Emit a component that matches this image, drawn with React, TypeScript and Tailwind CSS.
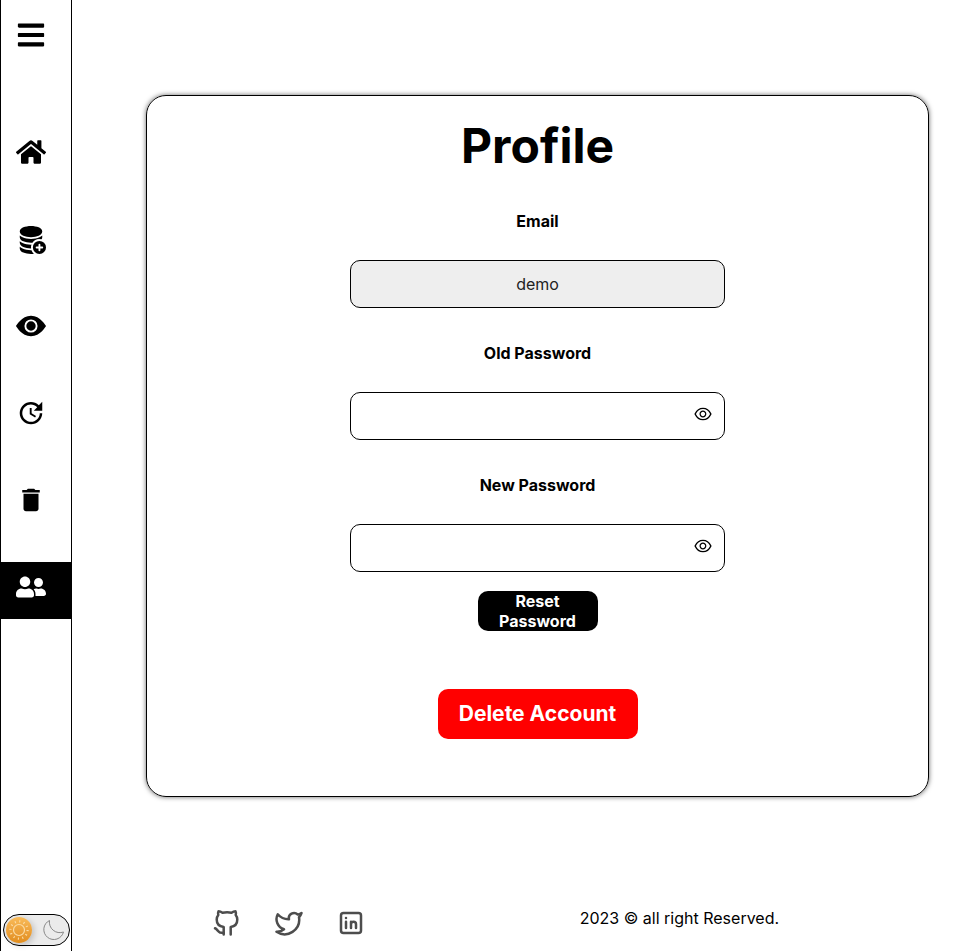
import { useState } from "react";
import type { ReactNode } from "react";
import { FaBars, FaHome, FaUserFriends } from "react-icons/fa";
import { BsDatabaseFillAdd, BsEyeFill } from "react-icons/bs";
import { MdUpdate, MdDelete } from "react-icons/md";
import { AiOutlineEye } from "react-icons/ai";
import { Twitter } from "lucide-react";

const links: { name: string; icon: ReactNode; active?: boolean }[] = [
  { name: "Home", icon: <FaHome size={30} /> },
  { name: "Add data", icon: <BsDatabaseFillAdd size={30} /> },
  { name: "View", icon: <BsEyeFill size={30} /> },
  { name: "Update", icon: <MdUpdate size={30} /> },
  { name: "Delete", icon: <MdDelete size={30} /> },
  { name: "Profile", icon: <FaUserFriends size={30} />, active: true },
];

function Sidebar() {
  return (
    <nav className="flex w-[72px] shrink-0 flex-col border-x border-black">
      <button type="button" aria-label="Menu" className="mt-5 ml-[15px] self-start">
        <FaBars size={30} />
      </button>
      <div className="mt-[77px] flex flex-col gap-[30px]">
        {links.map((link) => (
          <a
            key={link.name}
            href="#"
            aria-label={link.name}
            className={
              link.active
                ? "flex h-[57px] items-start bg-black pt-[10px] pl-[15px] text-white"
                : "flex h-[57px] items-start pt-[10px] pl-[15px]"
            }
          >
            {link.icon}
          </a>
        ))}
      </div>
      <ThemeSwitch />
    </nav>
  );
}

function ThemeSwitch() {
  const [dark, setDark] = useState(false);
  return (
    <label className="mx-auto mt-auto mb-[5px] flex h-8 w-[67px] cursor-pointer items-center justify-between rounded-full border border-black bg-[#ebebeb] pr-1 pl-[2px]">
      <input
        type="checkbox"
        aria-label="Dark mode"
        className="sr-only"
        checked={dark}
        onChange={(e) => setDark(e.target.checked)}
      />
      <span className="flex size-[26px] items-center justify-center rounded-full bg-linear-to-b from-[#f9bb58] to-[#e18d1c] shadow-[2px_2px_6px_rgba(0,0,0,0.2)]">
        <svg width="22" height="22" viewBox="0 0 22 22" fill="none" stroke="#fbdca6" strokeWidth="1.2">
          <circle cx="11" cy="11" r="5.5" />
          <circle cx="11" cy="11" r="8.6" strokeWidth="2.2" strokeDasharray="1.1 3.4" />
        </svg>
      </span>
      <svg width="22" height="22" viewBox="0 0 22 22" fill="none" stroke="#888" strokeWidth="1">
        <path d="M6.500 1.500A10 10 0 1 0 20.500 13A10.500 10.500 0 0 1 6.500 1.500Z" />
      </svg>
    </label>
  );
}

function PasswordField({ id, label }: { id: string; label: string }) {
  const [shown, setShown] = useState(false);
  return (
    <div className="flex w-full flex-col items-center">
      <label htmlFor={id} className="mb-[29px] leading-5 font-bold">
        {label}
      </label>
      <div className="flex h-12 w-full items-center rounded-[10px] border border-black pr-[11px]">
        <input
          id={id}
          type={shown ? "text" : "password"}
          className="h-full min-w-0 flex-1 bg-transparent text-center outline-none"
        />
        <button type="button" aria-label={"Show " + label} onClick={() => setShown(!shown)} className="pb-[5px]">
          <AiOutlineEye size={20} />
        </button>
      </div>
    </div>
  );
}

function Footer() {
  return (
    <footer className="mt-auto mr-[88px] ml-[33px] flex h-[43px] items-start justify-around">
      <div className="flex gap-8 text-[#4d4d4d]">
        <a href="#" aria-label="GitHub">
          <svg width="30" height="30" viewBox="0 0 30 30" fill="none" stroke="currentColor" strokeWidth="2.5" strokeLinecap="round" strokeLinejoin="round">
            <path d="M11.700 26.500V19C7.500 18.500 4.700 16 4.700 11.500C4.700 9.500 5.300 8.200 6.300 7C5.900 5.800 5.900 4.500 6.500 3.200C8 3.200 9.300 3.900 10.500 4.800C13 4.300 17.300 4.300 19.500 4.800C20.700 3.900 22 3.200 23.500 3.200C24.100 4.500 24.100 5.800 23.700 7C24.700 8.200 25.300 9.500 25.300 11.500C25.300 16 22.500 18.500 18.700 19V26.500" />
            <path d="M3 20.300C5 21 6 23.800 8 24.500L11.700 25" />
          </svg>
        </a>
        <a href="#" aria-label="Twitter">
          <Twitter size={30} />
        </a>
        <a href="#" aria-label="LinkedIn">
          <svg width="30" height="30" viewBox="0 0 24 24" fill="none" stroke="currentColor" strokeWidth="2" strokeLinecap="round" strokeLinejoin="round">
            <rect x="4" y="4" width="16" height="16" rx="2" />
            <path d="M8 11v5M8 8v.01M12 16v-5M16 16v-3a2 2 0 0 0-4 0" />
          </svg>
        </a>
      </div>
      <p className="leading-5">2023 © all right Reserved.</p>
    </footer>
  );
}

export default function App() {
  return (
    <div className="flex min-h-screen bg-white font-['Inter',sans-serif] text-base text-black">
      <Sidebar />
      <div className="flex min-w-0 flex-1 flex-col">
        <main className="mt-[95px] mr-[45px] mb-10 ml-[74px] flex flex-col items-center rounded-[20px] border border-black pt-5 pb-[57px] shadow-[0_0_5px_rgba(0,0,0,0.6)]">
          <h1 className="text-5xl leading-[60px] font-bold">Profile</h1>
          <form className="mt-[35px] flex w-[48%] flex-col items-center gap-[35px]" onSubmit={(e) => e.preventDefault()}>
            <div className="flex w-full flex-col items-center">
              <label htmlFor="email" className="mb-[29px] leading-5 font-bold">
                Email
              </label>
              <input
                id="email"
                type="text"
                readOnly
                value="demo"
                className="h-12 w-full rounded-[10px] border border-black bg-[#eee] text-center text-[#222] outline-none"
              />
            </div>
            <PasswordField id="old" label="Old Password" />
            <PasswordField id="new" label="New Password" />
            <button type="submit" className="-mt-4 h-10 w-[120px] rounded-[10px] bg-black px-4 leading-5 font-bold text-white">
              Reset Password
            </button>
          </form>
          <button type="button" className="mt-[58px] h-[50px] w-[200px] rounded-[10px] bg-[#f00] text-[21px] font-bold text-white">
            Delete Account
          </button>
        </main>
        <Footer />
      </div>
    </div>
  );
}
